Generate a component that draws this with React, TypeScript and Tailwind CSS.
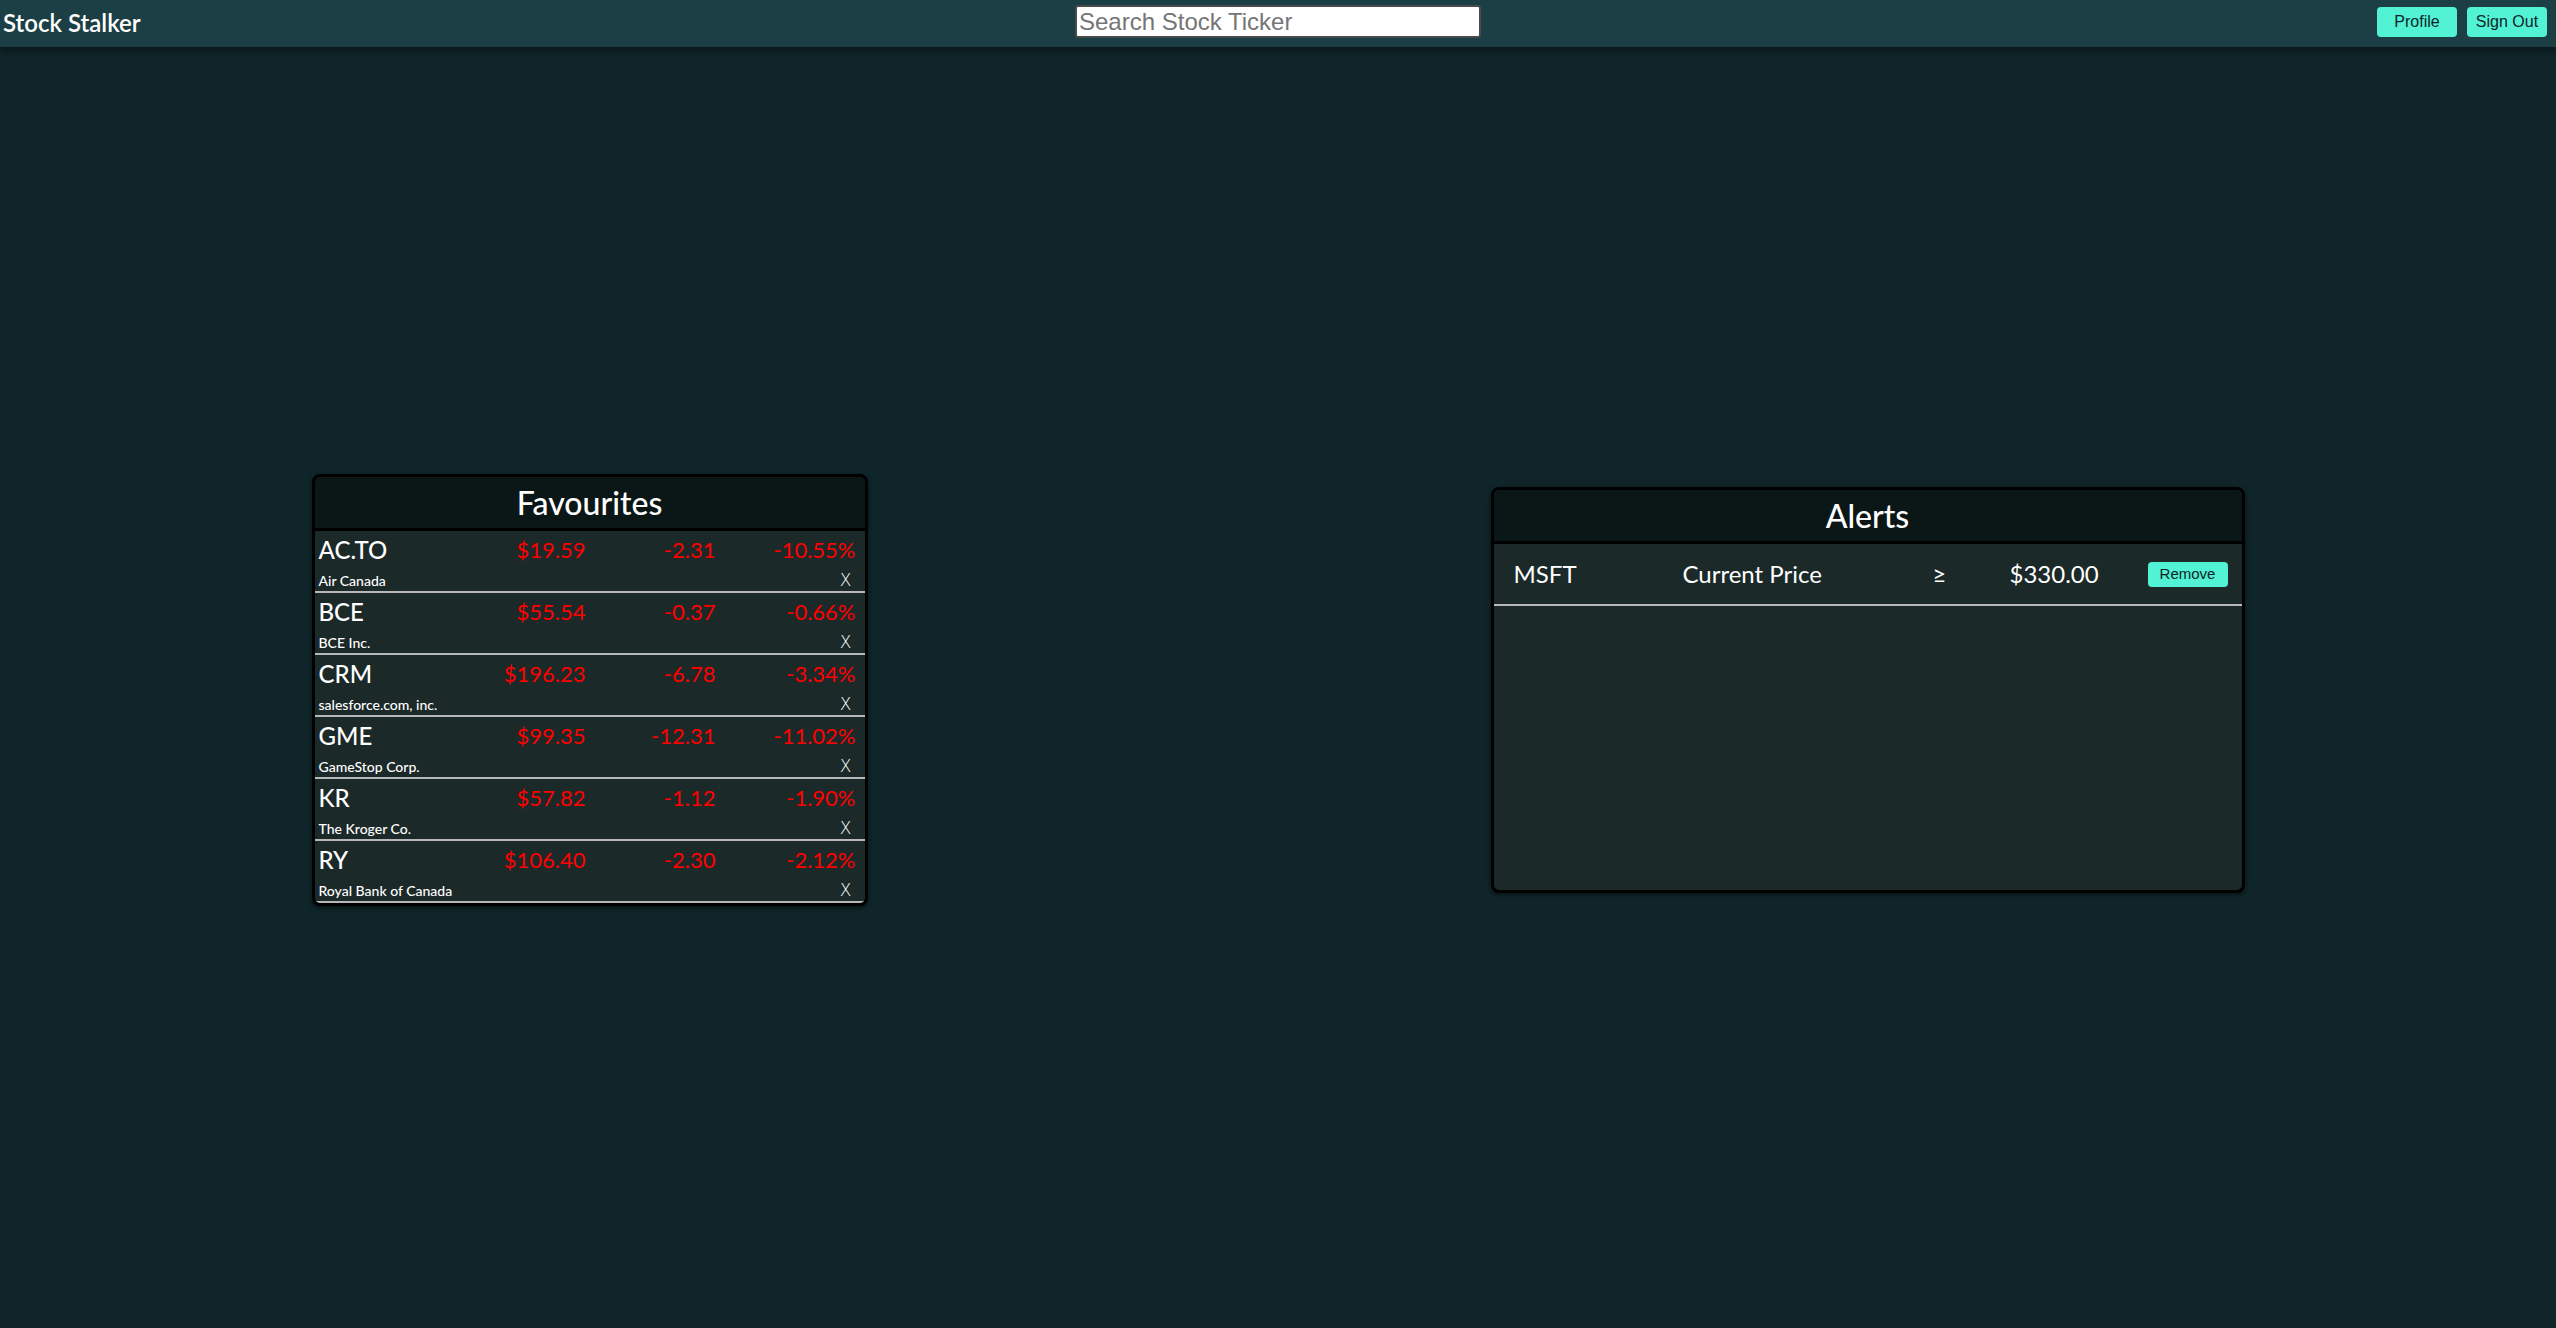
import React from "react";

interface Favourite {
  ticker: string;
  name: string;
  price: string;
  change: string;
  percent: string;
}

const favourites: Favourite[] = [
  { ticker: "AC.TO", name: "Air Canada", price: "$19.59", change: "-2.31", percent: "-10.55%" },
  { ticker: "BCE", name: "BCE Inc.", price: "$55.54", change: "-0.37", percent: "-0.66%" },
  { ticker: "CRM", name: "salesforce.com, inc.", price: "$196.23", change: "-6.78", percent: "-3.34%" },
  { ticker: "GME", name: "GameStop Corp.", price: "$99.35", change: "-12.31", percent: "-11.02%" },
  { ticker: "KR", name: "The Kroger Co.", price: "$57.82", change: "-1.12", percent: "-1.90%" },
  { ticker: "RY", name: "Royal Bank of Canada", price: "$106.40", change: "-2.30", percent: "-2.12%" },
];

const Navbar = () => (
  <nav className="relative z-10 grid h-[47px] grid-cols-3 items-start bg-[#1b3f45] shadow-[0_3px_8px_rgba(0,0,0,0.45)]">
    <div className="pl-[3px] text-[24px] font-semibold leading-[46px] text-white">Stock Stalker</div>
    <input
      type="text"
      placeholder="Search Stock Ticker"
      className="mt-[5px] h-[33px] w-[406px] justify-self-center rounded-[3px] border-2 border-[#4a4a4a] bg-white pl-[2px] font-['Liberation_Sans',Arial,sans-serif] text-[24px] text-black placeholder:text-[#757575] outline-none"
    />
    <div className="mt-[7px] flex justify-end gap-[10px] pr-[9px] font-['Liberation_Sans',Arial,sans-serif]">
      <button className="h-[30px] w-[80px] rounded-[4px] bg-[#52f2d5] text-[16px] text-[#102428]">Profile</button>
      <button className="h-[30px] w-[80px] rounded-[4px] bg-[#52f2d5] text-[16px] text-[#102428]">Sign Out</button>
    </div>
  </nav>
);

const FavouriteRow = ({ item }: { item: Favourite }) => (
  <div className="h-[62px] border-b-2 border-[#b8b8b8] pl-[4px] pt-[4px]">
    <div className="flex h-[30px] items-center leading-[30px]">
      <div className="flex-1 text-[24px] font-medium text-white">{item.ticker}</div>
      <div className="w-[130px] text-right text-[22px] text-[#ff0000]">{item.price}</div>
      <div className="w-[130px] text-right text-[22px] text-[#ff0000]">{item.change}</div>
      <div className="w-[149px] pr-[9px] text-right text-[22px] text-[#ff0000]">{item.percent}</div>
    </div>
    <div className="mt-[7px] flex items-end justify-between pr-[13px] text-white">
      <span className="text-[14px] font-medium leading-[17px]">{item.name}</span>
      <span className="font-['DejaVu_Sans',sans-serif] text-[17px] font-light leading-[17px]">X</span>
    </div>
  </div>
);

const Favourites = () => (
  <div className="w-[556px] overflow-hidden rounded-lg border-[3px] border-black bg-[#1b2929] shadow-[0_2px_4px_rgba(0,0,0,0.5)]">
    <div className="flex h-[54px] items-center justify-center border-b-[3px] border-black bg-[#0b1616] text-[32px] font-medium text-white">
      Favourites
    </div>
    {favourites.map((item) => (
      <FavouriteRow key={item.ticker} item={item} />
    ))}
  </div>
);

const Alerts = () => (
  <div className="h-[406px] w-[754px] overflow-hidden rounded-lg border-[3px] border-black bg-[#1b2929] shadow-[0_2px_4px_rgba(0,0,0,0.5)]">
    <div className="flex h-[54px] items-center justify-center border-b-[3px] border-black bg-[#0b1616] text-[32px] font-medium text-white">
      Alerts
    </div>
    <div className="grid h-[62px] grid-cols-[169px_250px_77px_138px_auto] items-center border-b-2 border-[#b8b8b8] pl-[20px] text-[24px] text-white">
      <div>MSFT</div>
      <div>Current Price</div>
      <div>≥</div>
      <div>$330.00</div>
      <button className="h-[25px] w-[80px] rounded-[4px] bg-[#52f2d5] font-['Liberation_Sans',Arial,sans-serif] text-[15px] text-[#102428]">
        Remove
      </button>
    </div>
  </div>
);

export default function App() {
  return (
    <div className="flex min-h-screen flex-col bg-[#0f2529] font-['Lato','Noto_Sans',sans-serif]">
      <Navbar />
      <main className="flex flex-1 items-center justify-around pt-[5px]">
        <Favourites />
        <Alerts />
      </main>
    </div>
  );
}
